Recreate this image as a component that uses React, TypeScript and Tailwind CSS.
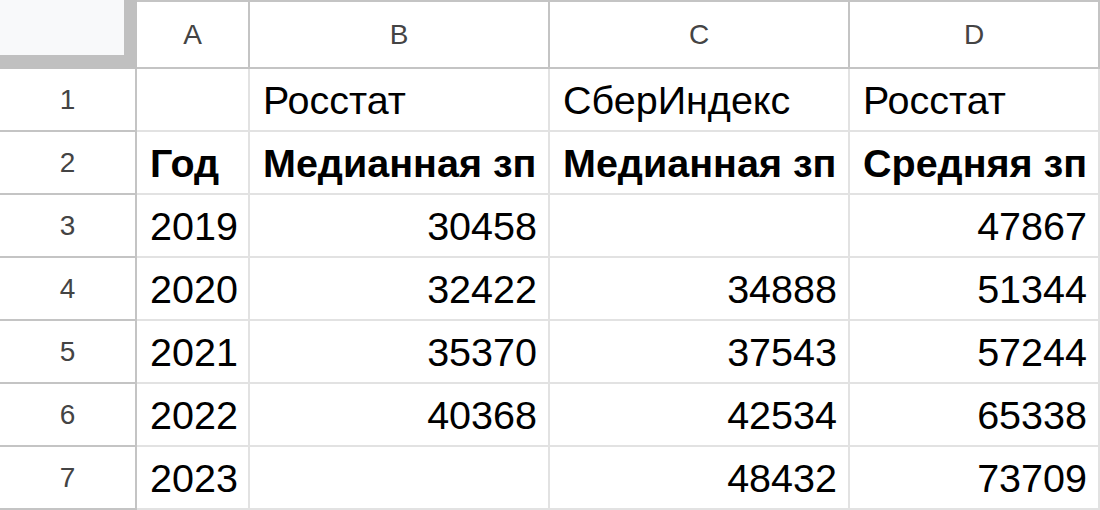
import React from 'react';

const cols = ['A', 'B', 'C', 'D'];

type Cell = { text: string; right?: boolean; bold?: boolean };

const rows: Cell[][] = [
  [{ text: '' }, { text: 'Росстат' }, { text: 'СберИндекс' }, { text: 'Росстат' }],
  [
    { text: 'Год', bold: true },
    { text: 'Медианная зп', bold: true },
    { text: 'Медианная зп', bold: true },
    { text: 'Средняя зп', bold: true },
  ],
  [{ text: '2019' }, { text: '30458', right: true }, { text: '', right: true }, { text: '47867', right: true }],
  [{ text: '2020' }, { text: '32422', right: true }, { text: '34888', right: true }, { text: '51344', right: true }],
  [{ text: '2021' }, { text: '35370', right: true }, { text: '37543', right: true }, { text: '57244', right: true }],
  [{ text: '2022' }, { text: '40368', right: true }, { text: '42534', right: true }, { text: '65338', right: true }],
  [{ text: '2023' }, { text: '', right: true }, { text: '48432', right: true }, { text: '73709', right: true }],
];

export default function App() {
  return (
    <div className="w-[1100px] h-[510px] overflow-hidden bg-white font-['Liberation_Sans',Arial,sans-serif]">
      <div className="grid grid-cols-[137px_113px_300px_300px_250px] grid-rows-[69px_repeat(7,63px)]">
        {/* corner */}
        <div className="bg-[#c0c0c0]">
          <div className="w-[124px] h-[55px] bg-[#f8f9fa]" />
        </div>
        {cols.map((c) => (
          <div
            key={c}
            className="flex items-center justify-center border-t-2 border-r-2 border-b-2 border-[#c4c4c4] text-[28px] text-[#444]"
          >
            {c}
          </div>
        ))}
        {rows.map((row, i) => (
          <React.Fragment key={i}>
            <div className="flex items-center justify-center border-r-2 border-b-2 border-[#c4c4c4] text-[28px] text-[#444]">
              {i + 1}
            </div>
            {row.map((cell, j) => (
              <div
                key={j}
                className={
                  'flex items-end border-r-2 border-b-2 border-[#e2e2e2] pb-[10px] text-[39.5px] leading-none text-black whitespace-nowrap ' +
                  (cell.right ? 'justify-end pr-[11px]' : 'justify-start pl-[13px]') +
                  (cell.bold ? ' font-bold' : '')
                }
              >
                {cell.text}
              </div>
            ))}
          </React.Fragment>
        ))}
      </div>
    </div>
  );
}
